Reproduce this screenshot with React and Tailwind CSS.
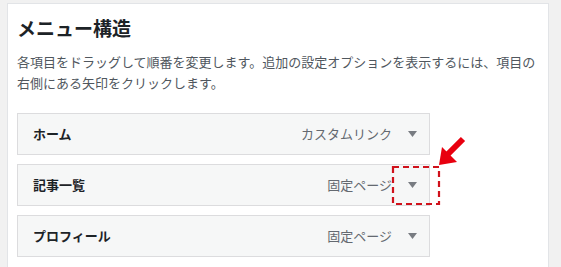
import React from 'react';

const items = [
  { title: 'ホーム', type: 'カスタムリンク' },
  { title: '記事一覧', type: '固定ページ' },
  { title: 'プロフィール', type: '固定ページ' },
];

function MenuItem({ title, type, highlight }) {
  return (
    <div className="relative flex h-[42px] w-[413px] items-center justify-between border border-[#dcdcde] bg-[#f6f7f7] pl-[15px]">
      <span className="text-[13px] font-bold text-[#1d2327]">{title}</span>
      <div className="flex items-center">
        <span className="text-[13px] text-[#646970]">{type}</span>
        <span className="flex w-[37px] items-center justify-center pl-[4px]">
          <svg width="9" height="6" viewBox="0 0 9 6">
            <path d="M0 0 H9 L4.5 6 Z" fill="#787c82" />
          </svg>
        </span>
      </div>
      {highlight && (
        <svg
          className="absolute left-[374px] top-[1px] overflow-visible"
          width="48"
          height="39"
          viewBox="0 0 48 39"
        >
          <rect x="1" y="1" width="46" height="37" fill="none" stroke="#d0111b" strokeWidth="2.2" strokeDasharray="6 4" />
        </svg>
      )}
    </div>
  );
}

export default function App() {
  return (
    <div
      className="min-h-[267px] w-[561px] overflow-hidden bg-[#f1f1f1] pl-[7px] pt-[3px]"
      style={{ fontFamily: '"Noto Sans CJK JP", "Noto Sans", sans-serif' }}
    >
      <div className="relative h-[264px] w-[542px] border border-b-0 border-[#e2e4e7] bg-white pl-[9px] pt-[10px]">
        <h2 className="text-[19px] font-bold leading-[28px] text-[#1d2327]">メニュー構造</h2>
        <p className="mt-[9px] w-[530px] text-[13px] leading-[21px] text-[#50575e]">
          各項目をドラッグして順番を変更します。追加の設定オプションを表示するには、項目の右側にある矢印をクリックします。
        </p>
        <div className="mt-[20px] flex flex-col gap-[9px]">
          {items.map((it, i) => (
            <MenuItem key={it.title} {...it} highlight={i === 1} />
          ))}
        </div>
        <svg className="absolute left-[420px] top-[130px]" width="40" height="40" viewBox="0 0 40 40">
          <line x1="35" y1="5" x2="20" y2="20" stroke="#e8000f" strokeWidth="6" />
          <path d="M11 31 L14 13 L29 28 Z" fill="#e8000f" />
        </svg>
      </div>
    </div>
  );
}
